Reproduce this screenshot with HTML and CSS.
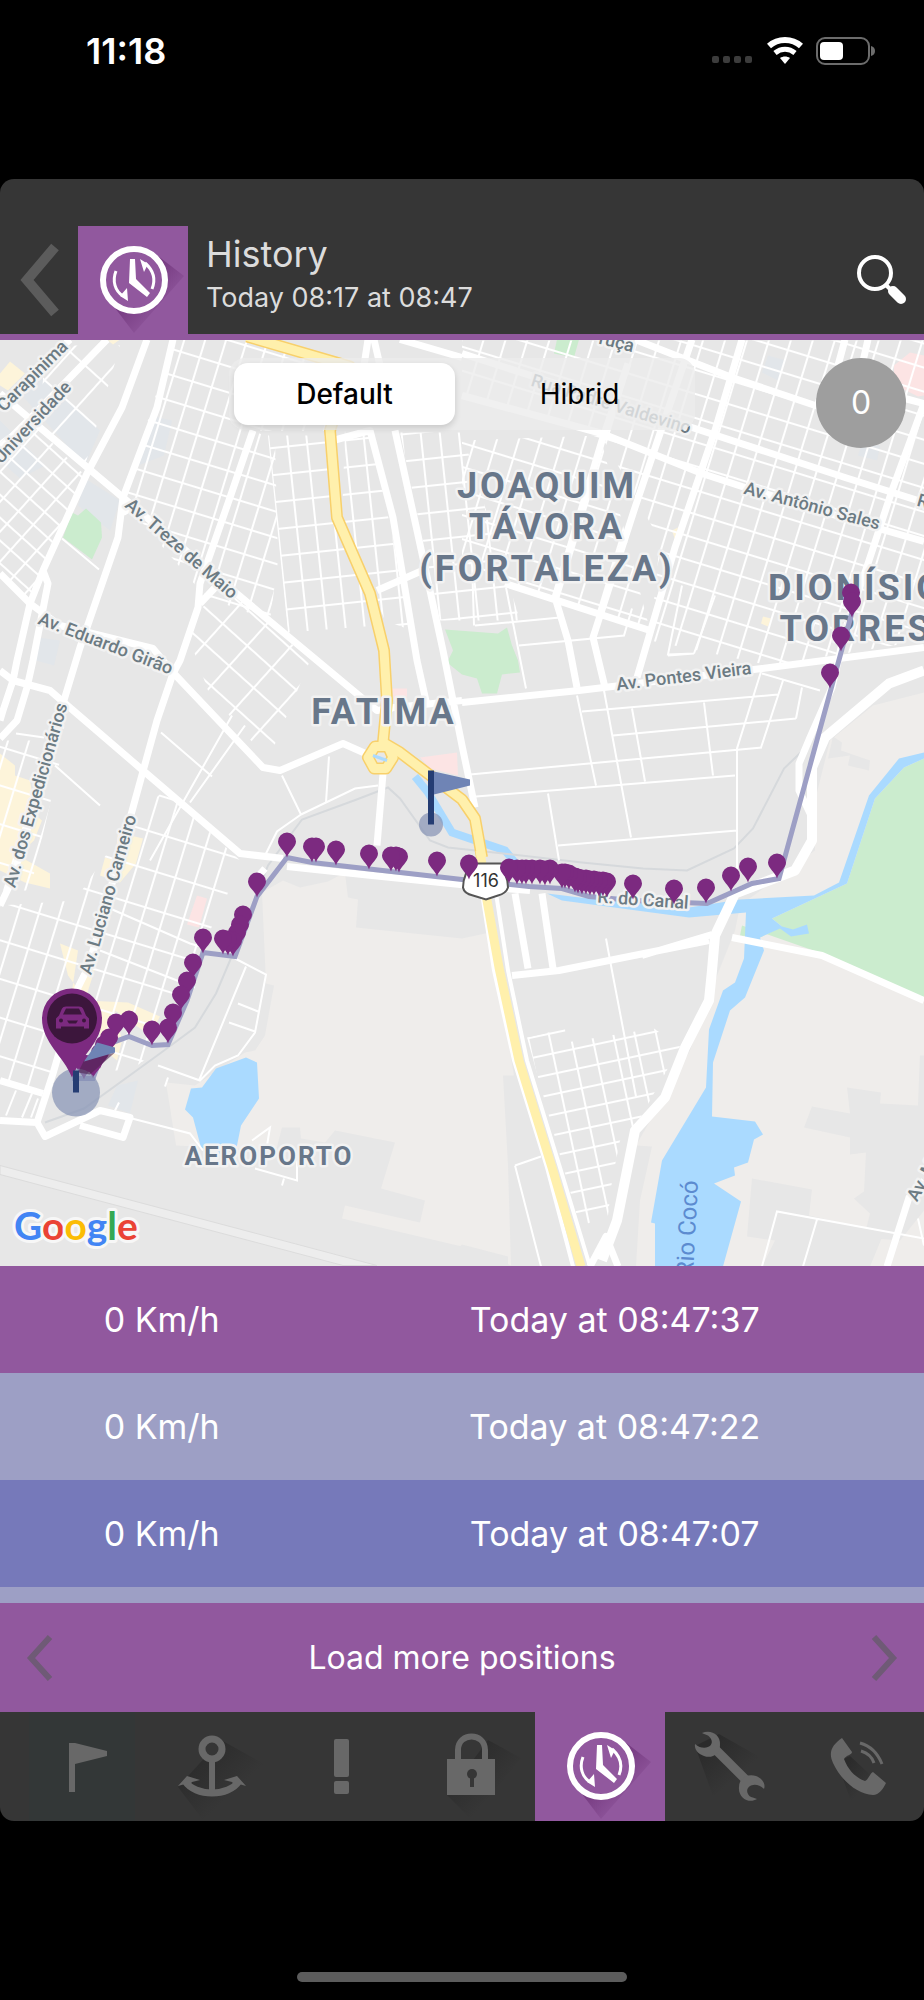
FILE: index.html
```html
<!DOCTYPE html>
<html lang="en">
<head>
    <meta charset="UTF-8">
    <meta name="viewport" content="width=device-width, initial-scale=1.0">
    <title>History</title>
    <link rel="stylesheet" href="styles.css">
</head>
<body>
    <svg width="0" height="0" class="symbols" aria-hidden="true">
        <defs>
            <linearGradient id="shadeDark" x1="0" y1="0" x2="1" y2="1">
                <stop offset="0.2" stop-color="#2b2b2b"/>
                <stop offset="0.65" stop-color="#363636"/>
            </linearGradient>
            <linearGradient id="shadePurple" x1="0" y1="0" x2="1" y2="1">
                <stop offset="0.35" stop-color="#74397f"/>
                <stop offset="0.75" stop-color="#91589e"/>
            </linearGradient>
            <symbol id="clock" viewBox="0 0 110 108">
                <path d="M34 78 L56 107 L106 50 L80 30 Z" fill="url(#shadePurple)"/>
                <circle cx="56" cy="54" r="31" fill="#91589e" stroke="#fff" stroke-width="6"/>
                <path d="M52 33 L57 33 L58 53 L72 67 L69 71 L51 57 Z" fill="#fff"/>
                <path d="M38 45 C34 55 37 65 45 70 M74 63 C78 53 75 44 67 37" fill="none" stroke="#fff" stroke-width="3"/>
                <path d="M42 70 L49 62 L50 75 Z M70 38 L62 33 L66 46 Z" fill="#fff"/>
            </symbol>
        </defs>
    </svg>

    <div class="phone">
        <div class="status-bar">
            <span class="time">11:18</span>
            <div class="status-icons">
                <svg width="43" height="28" viewBox="0 0 43 28" fill="#3c3c3c">
                    <rect x="1" y="19" width="7" height="7" rx="2"/>
                    <rect x="12" y="19" width="7" height="7" rx="2"/>
                    <rect x="23" y="19" width="7" height="7" rx="2"/>
                    <rect x="34" y="19" width="7" height="7" rx="2"/>
                </svg>
                <svg width="36" height="28" viewBox="0 0 36 28">
                    <path d="M2 9 C11 1 25 1 34 9" fill="none" stroke="#fff" stroke-width="6"/>
                    <path d="M8 16 C14 11 22 11 28 16" fill="none" stroke="#fff" stroke-width="5"/>
                    <path d="M18 27 L13 21 C16 19 20 19 23 21 Z" fill="#fff"/>
                </svg>
                <svg width="60" height="28" viewBox="0 0 60 28">
                    <rect x="1" y="1" width="52" height="26" rx="8" fill="none" stroke="#6c6c6c" stroke-width="2"/>
                    <rect x="4" y="5" width="23" height="18" rx="4" fill="#fff"/>
                    <path d="M55 9 Q59 10 59 14 Q59 18 55 19 Z" fill="#6c6c6c"/>
                </svg>
            </div>
        </div>

        <div class="app">
            <header class="header">
                <button type="button" class="back" aria-label="Back">
                    <svg width="42" height="76" viewBox="0 0 42 76"><path d="M37 5 L9 38 L37 71" fill="none" stroke="#5c5c5c" stroke-width="10"/></svg>
                </button>
                <div class="header-tile">
                    <svg width="110" height="108"><use href="#clock"/></svg>
                </div>
                <div class="header-text">
                    <h1>History</h1>
                    <p>Today 08:17 at 08:47</p>
                </div>
                <button type="button" class="search" aria-label="Search">
                    <svg width="50" height="50" viewBox="0 0 50 50">
                        <circle cx="18" cy="18" r="16" fill="none" stroke="#fff" stroke-width="4"/>
                        <path d="M28 29 L33 34" stroke="#fff" stroke-width="4"/>
                        <path d="M36 36 L44 44" stroke="#fff" stroke-width="10" stroke-linecap="round"/>
                    </svg>
                </button>
            </header>

            <main class="map">
                <svg class="map-canvas" viewBox="0 339 924 927" preserveAspectRatio="xMidYMid slice">
                    <defs>
                        <pattern id="gridNorth" width="20" height="25" patternUnits="userSpaceOnUse" patternTransform="translate(180 350) rotate(17)">
                            <path d="M0 1H20M1 0V25"/>
                        </pattern>
                        <pattern id="gridCentre" width="19" height="27" patternUnits="userSpaceOnUse" patternTransform="translate(325 441) rotate(-6)">
                            <path d="M0 1H19M1 0V27"/>
                        </pattern>
                        <pattern id="gridDiagonal" width="20" height="17" patternUnits="userSpaceOnUse" patternTransform="translate(0 470) rotate(42)">
                            <path d="M0 1H20M1 0V17"/>
                        </pattern>
                        <pattern id="gridCampus" width="42" height="38" patternUnits="userSpaceOnUse" patternTransform="translate(70 350) rotate(42)">
                            <path d="M0 1H42M1 0V38"/>
                        </pattern>
                        <pattern id="gridBlocks" width="33" height="27" patternUnits="userSpaceOnUse" patternTransform="translate(211 684) rotate(42)">
                            <path d="M0 1H33M1 0V27"/>
                        </pattern>
                        <pattern id="gridEast" width="21" height="23" patternUnits="userSpaceOnUse" patternTransform="translate(700 490) rotate(17)">
                            <path d="M0 1H21M1 0V23"/>
                        </pattern>
                        <pattern id="gridSouth" width="20" height="37" patternUnits="userSpaceOnUse" patternTransform="translate(0 900) rotate(17)">
                            <path d="M0 1H20M1 0V37"/>
                        </pattern>
                        <pattern id="gridVillage" width="21" height="20" patternUnits="userSpaceOnUse" patternTransform="translate(527 1037) rotate(-12)">
                            <path d="M0 1H21M1 0V20"/>
                        </pattern>
                        <path id="pin" d="M0 0 C-2 -7 -9 -10 -9 -16 A9 9 0 0 1 9 -16 C9 -10 2 -7 0 0 Z"/>
                    </defs>

                    <rect x="0" y="339" width="924" height="927" fill="#e7e7e7"/>

                    <!-- open land -->
                    <g fill="#efedeb">
                        <path d="M262 892 L283 880 L300 887 L328 881 L345 872 L348 897 L358 899 L356 927 L462 938 L490 932 L514 1075 L503 1075 L508 1165 L511 1265 L462 1246 L342 1218 L345 1205 L420 1222 L425 1200 L381 1188 L395 1142 L335 1130 L325 1142 L301 1138 L300 1127 L282 1127 L276 1150 L176 1145 L166 1082 L195 1085 L245 1052 L255 1050 L265 1035 L274 985 L266 983 Z"/>
                        <path d="M924 692 L873 705 L830 740 L815 800 L815 850 L740 905 L735 930 L715 980 L690 1050 L636 1145 L652 1146 L640 1200 L636 1266 L924 1266 Z"/>
                    </g>
                    <g fill="#e7e7e7">
                        <path d="M847 1087 L881 1092 L880 1103 L918 1105 L920 1055 L924 1055 V1210 L900 1240 L864 1237 L870 1213 L854 1198 L864 1191 L866 1152 L850 1154 L850 1137 L804 1127 L812 1106 L850 1113 Z"/>
                        <path d="M752 1178 L812 1189 L809 1215 L884 1232 L870 1266 L762 1266 L775 1240 L747 1236 Z"/>
                        <path d="M833 736 L842 742 L841 750 L870 760 L869 770 L848 765 L850 755 L828 758 Z"/>
                        <path d="M462 1244 L508 1256 V1266 H440 Z"/>
                    </g>
                    <g fill="#e2e6ea">
                        <path d="M40 375 L100 430 L85 465 L22 395 Z M85 478 L120 500 L110 530 L78 505 Z M150 415 L172 420 L164 455 L138 465 L148 430 Z M38 637 L60 640 L54 665 L36 660 Z M117 1085 L138 1080 L130 1113 L108 1105 Z M768 355 L786 360 L778 380 L762 372 Z M862 443 L880 445 L877 460 L858 455 Z M0 420 L45 465 L20 478 L0 460 Z"/>
                    </g>
                    <g fill="#fdf4da">
                        <path d="M10 361 L25 373 L8 390 L0 385 V373 Z M108 340 L120 339 L113 344 Z"/>
                        <path d="M0 753 L15 765 V775 L30 780 L36 815 L42 820 L34 840 L18 855 L50 873 V888 L25 882 L0 870 Z"/>
                        <path d="M118 832 L143 838 L136 863 L120 882 L100 875 L105 857 L115 860 Z M60 943 L78 950 L72 990 L95 968 L85 1000 L128 1002 L160 1016 L150 1035 L115 1010 L122 1040 L117 1060 L105 1050 L90 1005 L68 975 Z"/>
                        <path d="M672 530 L678 527 L675 539 Z M763 616 L771 618 L768 626 L761 623 Z"/>
                    </g>
                    <path d="M197 895 L207 898 L199 927 L187 924 Z M392 688 H407 V700 H394 Z M420 757 L457 752 L458 775 L430 768 Z M894 365 L910 352 L924 355 V395 L918 396 L894 384 Z" fill="#fce4e4"/>

                    <!-- parks -->
                    <g fill="#cbecce">
                        <path d="M63 537 L72 512 L78 515 L86 508 L101 522 L102 537 L92 559 Z"/>
                        <path d="M557 339 H579 L574 357 L554 353 Z"/>
                        <path d="M445 629 L498 633 L507 627 L512 645 L518 660 L520 672 L502 674 L497 693 L482 693 L477 678 L462 674 L447 662 L453 650 Z"/>
                        <path d="M924 758 L904 767 L875 798 L847 883 L772 918 L782 926 L760 937 L740 935 L742 925 L822 953 L924 1000 Z"/>
                    </g>

                    <!-- water -->
                    <g fill="#aadaff">
                        <path d="M202 1087 L216 1068 L246 1057 L257 1062 L259 1098 L241 1125 L236 1150 L218 1154 L201 1147 L193 1117 L185 1109 L191 1088 Z"/>
                        <path d="M547 893 L580 897 L689 907 L740 899 L814 895 L839 882 L869 795 L899 758 L924 752 V758 L904 767 L875 798 L847 883 L772 918 L782 926 L793 929 L807 924 L809 933 L791 936 L780 928 L760 937 L764 950 L745 997 L730 1010 L713 1062 L712 1116 L755 1121 L763 1134 L754 1139 L748 1162 L734 1167 L735 1175 L714 1183 L741 1201 L723 1266 H655 L655 1223 L651 1222 L662 1160 L706 1087 L709 1029 L723 990 L735 982 L744 958 L746 912 L689 917 L562 900 Z"/>
                    </g>
                    <path d="M415 776 L428 792 L452 832 L505 850 L515 862" fill="none" stroke="#aadaff" stroke-width="8"/>

                    <!-- railway -->
                    <path d="M45 1122 L84 1108 L160 1053 L195 1027 L216 993 L230 960 L268 865 L302 819 L354 800 L388 787 L400 798 L430 840 L448 847 L530 856 L582 862 L643 868 L687 870 L734 848 L753 828 L784 768 L807 746" fill="none" stroke="#d6d9dc" stroke-width="2"/>

                    <!-- side streets -->
                    <g class="street-grid">
                        <path d="M173 339 H240 L345 362 L330 430 L253 430 L200 590 L123 500 Z" fill="url(#gridNorth)"/>
                        <path d="M253 430 L275 440 L278 560 L270 620 L215 600 L200 590 Z" fill="url(#gridNorth)"/>
                        <path d="M268 435 L330 435 L340 520 L370 595 L378 625 L288 632 Z" fill="url(#gridCentre)"/>
                        <path d="M345 430 L370 430 L412 630 L385 620 L372 590 L342 520 Z" fill="url(#gridCentre)"/>
                        <path d="M400 432 L462 432 L520 620 L440 620 Z" fill="url(#gridCentre)"/>
                        <path d="M0 440 L30 420 L85 475 L43 570 L28 600 L0 573 Z" fill="url(#gridDiagonal)"/>
                        <path d="M45 345 L120 345 L85 465 L40 425 Z" fill="url(#gridCampus)"/>
                        <path d="M196 610 L232 590 L310 660 L268 760 L208 690 L190 640 Z" fill="url(#gridBlocks)"/>
                        <path d="M462 340 H924 V640 L770 665 L650 640 L660 540 L600 433 L462 395 Z" fill="url(#gridEast)"/>
                        <path d="M462 440 L600 435 L650 630 L510 585 L462 560 Z" fill="url(#gridEast)"/>
                        <path d="M0 905 L75 900 L133 815 L165 790 L240 860 L225 900 L200 950 L165 1045 L130 1070 L55 1070 L43 1095 L0 1083 Z" fill="url(#gridSouth)"/>
                        <path d="M0 740 L30 740 L65 720 L60 760 L30 890 L0 890 Z" fill="url(#gridSouth)"/>
                        <path d="M527 1037 L565 1028 L566 1042 L654 1028 L680 1046 L640 1118 L620 1140 L612 1180 L608 1215 L580 1226 Z" fill="url(#gridVillage)"/>
                    </g>
                    <g class="street">
                        <path d="M55 765 L100 805 M16 733 L44 737 M100 950 L195 987 M110 908 L190 943 L200 946 M235 958 L266 974 L255 1032 L238 1055 L215 1065 L200 1080 L158 1065 M246 966 L199 1080 M238 1003 L258 1011 M229 1022 L255 1031"/>
                        <path d="M282 775 L301 814 L277 831 L265 855 M329 756 L326 802 M301 814 L355 788 L378 785 M161 732 L212 776 M232 715 L150 860 M245 725 L190 802 M62 538 L99 569"/>
                        <path d="M577 695 L596 785 M604 690 L631 837 M582 711 L778 694 M613 735 L796 718 M470 774 L762 747 M476 796 L735 775 M632 708 L645 781 M704 702 L713 775 M762 668 L737 748 L737 870 M783 680 L761 747 M802 687 L796 718 M762 673 L820 690 M548 793 L559 860 M558 845 L737 830"/>
                        <path d="M506 587 L526 688 M475 625 L560 617 M519 645 L624 635 L632 608 M472 560 L474 625 M668 655 L694 653 L668 654 L682 585 M694 653 L715 595"/>
                        <path d="M132 1118 L190 1133 L203 1150 M165 1086 L168 1077 M115 1110 L119 1102 M252 1140 L270 1127 L267 1145 M255 1168 L297 1180 V1160 M282 1185 L284 1178"/>
                        <path d="M515 1165 L541 1156 M515 1165 L541 1266 M606 938 L611 965 L636 1096 M762 1266 L777 1211 L924 1238 M803 1266 L817 1219 M918 1218 L924 1245"/>
                        <path d="M6 1115 L16 1090 M22 1117 L32 1093 M31 1117 L38 1098"/>
                    </g>

                    <!-- avenues -->
                    <g class="avenue">
                        <path d="M70 339 L0 405 M107 339 L40 408 L0 448 M0 393 L40 427 L123 497 L233 590 L317 660 L377 710 L392 708"/>
                        <path d="M147 339 L122 407 L87 473 L43 570 L30 603 L17 660 L13 680 L3 710 L0 720 M43 570 L48 583 L33 660 L27 687 L17 720 L0 738"/>
                        <path d="M173 339 L157 407 L123 497 L118 537 L80 647 L63 703 L33 810 L12 880 L0 905 M123 512 L135 505"/>
                        <path d="M253 430 L230 497 L200 583 L198 607 L180 660 L173 673 L157 720 L133 807 L90 963 L78 987 L53 1073 L37 1122 M200 603 L217 585"/>
                        <path d="M0 573 L30 603 L60 625 L153 648 L173 672 L263 767 L280 770 L343 743 L370 755"/>
                        <path d="M0 670 L13 680 L50 690 L143 770 L240 853 L283 858"/>
                        <path d="M287 866 L372 875 L470 885 L530 890"/>
                        <path d="M383 773 L377 845 M333 440 L370 430 L393 517 L417 660 L427 705 M395 430 L417 530 L443 650 L462 745 L475 807 M377 590 L427 568 M385 708 L462 700"/>
                        <path d="M368 339 L364 365 M374 339 L380 365 M400 339 L462 357"/>
                        <path d="M635 339 L732 377 L860 420 M905 398 L924 403 M462 395 L602 433 L702 473 L745 487 L875 527 L924 541 M462 353 L540 378 L692 427 L845 477 L924 502"/>
                        <path d="M742 339 L715 430 L675 547 L637 677 M924 403 L892 490 L868 563 L845 630 M845 339 L838 365 M868 339 L862 365"/>
                        <path d="M628 363 L602 440 L555 597 L568 640 L577 687 M692 339 L662 427 L635 507 L593 637 L605 687 M505 583 L650 630"/>
                        <path d="M462 702 L579 690 L762 668 L924 647"/>
                        <path d="M515 893 L528 968 M542 893 L553 968 M512 975 L559 970 L709 940 M642 955 L712 934"/>
                        <path d="M732 937 L822 955 L924 1000 M924 1180 L909 1197 L887 1266"/>
                        <path d="M0 1080 L43 1093 M0 1120 L37 1122 L45 1136 L100 1110 L130 1117 L123 1137 L80 1125"/>
                        <path d="M250 885 L265 868 M845 630 L832 687 L810 737 L799 763 L799 790 L812 817"/>
                        <path d="M590 1266 L606 1236 L618 1266"/>
                    </g>
                    <path class="avenue wide" d="M924 670 L889 683 L825 737 L812 767 L812 840 L795 870 L735 893 L715 935 L712 970 L709 1000 L685 1047 L665 1097 L635 1130 L617 1220 L602 1260"/>

                    <!-- motorway -->
                    <path d="M480 880 L494 970 L514 1060 L547 1167 L573 1266 M494 880 L508 970 L527 1060 L560 1167 L590 1266" fill="none" stroke="#fff" stroke-width="4"/>
                    <g class="motorway-edge">
                        <path id="motorway" d="M247 336 L350 366 L330 430 L337 517 L370 593 L384 650 L387 700 L383 742 L400 752 L462 799 L475 818 L482 857"/>
                        <path id="roundabout" d="M368 757 L375 746 L388 746 L393 757 L386 768 L374 768 Z"/>
                    </g>
                    <g class="motorway">
                        <use href="#motorway"/>
                        <use href="#roundabout"/>
                        <path d="M480 850 L487 900 L499 967 L519 1060 L552 1167 L581 1266"/>
                    </g>
                    <path d="M373 755 L387 760" stroke="#aadaff" stroke-width="3"/>

                    <!-- runway -->
                    <path d="M0 1165 L377 1265 H343 L0 1174 Z" fill="#ededed" stroke="#dcdcdc"/>

                    <g class="road-label">
                        <text transform="translate(4 412) rotate(-45)">Carapinima</text>
                        <text transform="translate(1 464) rotate(-47)">Universidade</text>
                        <text transform="translate(124 506) rotate(41)">Av. Treze de Maio</text>
                        <text transform="translate(37 623) rotate(21)">Av. Eduardo Girão</text>
                        <text transform="translate(15 888) rotate(-74)">Av. dos Expedicionários</text>
                        <text transform="translate(91 975) rotate(-74)">Av. Luciano Carneiro</text>
                        <text transform="translate(598 343) rotate(14)">ruça</text>
                        <text transform="translate(530 385) rotate(17)">Rua Padre Valdevino</text>
                        <text transform="translate(743 493) rotate(15)">Av. Antônio Sales</text>
                        <text transform="translate(916 505) rotate(16)">R</text>
                        <text transform="translate(617 690) rotate(-7)">Av. Pontes Vieira</text>
                        <text transform="translate(917 1202) rotate(-62)">Av. M</text>
                    </g>
                    <text class="river-label" transform="translate(693 1276) rotate(-87)">Rio Cocó</text>

                    <g class="area-label">
                        <text x="547" y="497">JOAQUIM</text>
                        <text x="547" y="538">TÁVORA</text>
                        <text x="547" y="580">(FORTALEZA)</text>
                        <text x="384" y="723">FATIMA</text>
                        <text x="856" y="599">DIONÍSIO</text>
                        <text x="856" y="640">TORRES</text>
                        <text x="269" y="1164" class="small">AEROPORTO</text>
                    </g>

                    <path d="M852 612 L779 878 L752 883 L707 903 L633 900 L589 896 L562 888 L529 886 L462 879 L312 862 L287 857 L257 896 L235 956 L203 952 L187 1000 L168 1044 L152 1045 L129 1036 L105 1045 L93 1078 L72 1078" fill="none" stroke="#9d9fc5" stroke-width="5"/>
                    <text class="road-label" transform="translate(597 902) rotate(4)">R. do Canal</text>

                    <!-- road shield -->
                    <path d="M465 863 H506 L505 873 Q508 880 508 887 Q506 893 498 895 L486 899 L473 895 Q464 893 463 887 Q463 880 466 873 Z" fill="#fff" stroke="#555" stroke-width="2"/>
                    <text x="486" y="886" class="shield">116</text>

                    <g id="pins" fill="#7c2a80"></g>

                    <!-- start flag -->
                    <circle cx="431" cy="824" r="12" fill="#8592b3" fill-opacity="0.7"/>
                    <path d="M434 771 L470 779 V785 L434 794 Z" fill="#6f84b5"/>
                    <rect x="428" y="770" width="6" height="54" fill="#253d73"/>

                    <!-- vehicle -->
                    <circle cx="76" cy="1092" r="24" fill="#8592b3" fill-opacity="0.7"/>
                    <path d="M72 1077 C64 1056 42 1042 42 1018 A30 30 0 0 1 102 1018 C102 1042 80 1056 72 1077 Z" fill="#7c2a80"/>
                    <path d="M84 1060 L115 1052 L90 1074 L78 1072 Z" fill="#4d2450" fill-opacity="0.6"/>
                    <path d="M97 1042 L115 1047 V1052 L84 1061 Z" fill="#6f84b5"/>
                    <rect x="73" y="1070" width="6" height="22" fill="#253d73"/>
                    <circle cx="72" cy="1018" r="25" fill="#3c163c"/>
                    <path d="M59 1015 L62 1008 Q63 1006 66 1006 H79 Q82 1006 83 1008 L86 1015 L89 1018 V1028 H84 V1026 H61 V1028 H56 V1018 Z" fill="#7c2a80"/>
                    <path d="M63 1014 L66 1008 H79 L82 1014 Z M67 1020 H78 L76 1023 H69 Z" fill="#3c163c"/>
                    <circle cx="61" cy="1020" r="2" fill="#3c163c"/>
                    <circle cx="84" cy="1020" r="2" fill="#3c163c"/>

                    <text x="14" y="1239" class="logo"><tspan fill="#4285f4">G</tspan><tspan fill="#ea4335">o</tspan><tspan fill="#fbbc05">o</tspan><tspan fill="#4285f4">g</tspan><tspan fill="#34a853">l</tspan><tspan fill="#ea4335">e</tspan></text>
                </svg>

                <div class="map-type">
                    <button type="button" class="active">Default</button>
                    <button type="button">Hibrid</button>
                </div>
                <span class="speed">0</span>
            </main>

            <div class="positions">
                <table>
                    <tbody>
                        <tr><td>0 Km/h</td><td>Today at 08:47:37</td></tr>
                        <tr><td>0 Km/h</td><td>Today at 08:47:22</td></tr>
                        <tr><td>0 Km/h</td><td>Today at 08:47:07</td></tr>
                        <tr><td></td><td></td></tr>
                    </tbody>
                </table>
            </div>

            <div class="load-more">
                <button type="button" aria-label="Previous">
                    <svg width="28" height="48" viewBox="0 0 28 48"><path d="M24 3 L5 24 L24 45" fill="none" stroke="#6f5a76" stroke-width="6"/></svg>
                </button>
                <button type="button">Load more positions</button>
                <button type="button" aria-label="Next">
                    <svg width="28" height="48" viewBox="0 0 28 48"><path d="M4 3 L23 24 L4 45" fill="none" stroke="#6f5a76" stroke-width="6"/></svg>
                </button>
            </div>

            <nav class="tabs">
                <button type="button" class="flag" aria-label="Flag">
                    <svg width="110" height="108" viewBox="0 0 110 108">
                        <path d="M42 31 H48 L80 39 V44 L48 52 V80 H42 Z" fill="#686868"/>
                    </svg>
                </button>
                <button type="button" aria-label="Anchor">
                    <svg width="110" height="108" viewBox="0 0 110 108">
                        <path d="M22 75 L47 108 L108 52 L65 28 Z" fill="url(#shadeDark)"/>
                        <circle cx="56" cy="37" r="10" fill="#363636" stroke="#686868" stroke-width="7"/>
                        <path d="M56 48 V80" stroke="#686868" stroke-width="6"/>
                        <path d="M29 69 C39 85 73 85 83 69" fill="none" stroke="#686868" stroke-width="7"/>
                        <path d="M22 74 L31 64 L44 68 L36 70 L32 75 L29 72 Z M90 74 L81 64 L68 68 L76 70 L80 75 L83 72 Z" fill="#686868"/>
                    </svg>
                </button>
                <button type="button" aria-label="Alerts">
                    <svg width="110" height="108" viewBox="0 0 110 108" fill="#686868">
                        <rect x="48" y="27" width="15" height="38" rx="2"/>
                        <rect x="48" y="69" width="15" height="13" rx="2"/>
                    </svg>
                </button>
                <button type="button" aria-label="Lock">
                    <svg width="110" height="108" viewBox="0 0 110 108">
                        <path d="M31 83 L56 108 L105 46 L72 28 Z" fill="url(#shadeDark)"/>
                        <path d="M42 50 V38 C42 20 69 20 69 38 V50" fill="none" stroke="#686868" stroke-width="6"/>
                        <rect x="31" y="47" width="48" height="36" fill="#686868"/>
                        <circle cx="56" cy="62" r="5" fill="#363636"/>
                        <path d="M56 62 V75" stroke="#363636" stroke-width="4"/>
                    </svg>
                </button>
                <button type="button" class="active" aria-label="History">
                    <svg width="110" height="108"><use href="#clock"/></svg>
                </button>
                <button type="button" aria-label="Maintenance">
                    <svg width="110" height="108" viewBox="0 0 110 108">
                        <path d="M20 34 L38 84 L90 48 L44 22 Z" fill="url(#shadeDark)"/>
                        <path d="M40 37 L74 71" stroke="#686868" stroke-width="9"/>
                        <path d="M27 21 C35 17 46 22 45 33 C45 42 37 47 29 44 C23 42 19 37 20 32 C29 40 40 34 36 27 C34 23 31 23 27 21 Z" fill="#686868"/>
                        <path d="M82 87 C74 92 63 86 64 75 C64 66 73 61 81 64 C87 66 91 72 89 77 C80 68 69 75 73 82 C75 86 78 85 82 87 Z" fill="#686868"/>
                    </svg>
                </button>
                <button type="button" aria-label="Call">
                    <svg width="110" height="108" viewBox="0 0 110 108">
                        <path d="M33 50 L48 92 L74 70 L46 44 Z" fill="url(#shadeDark)"/>
                        <path d="M38 26 C28 33 24 40 29 51 C38 70 54 82 69 83 C75 83 79 77 82 71 L69 60 C66 61 65 67 61 69 C52 66 44 58 40 47 C42 43 48 43 48 40 Z" fill="#686868"/>
                        <path d="M56 31 C67 34 74 42 78 52 M57 39 C64 41 68 45 70 51" fill="none" stroke="#686868" stroke-width="3"/>
                    </svg>
                </button>
            </nav>
        </div>

        <div class="home-area">
            <div class="home-indicator"></div>
        </div>
    </div>

    <script>
        const positions = [
            [851, 608], [852, 617], [841, 651], [830, 688], [777, 878], [748, 882], [731, 891], [706, 903],
            [674, 904], [633, 899], [607, 897], [603, 896], [599, 896], [594, 895], [590, 895], [586, 894],
            [582, 894], [578, 893], [575, 892], [569, 889], [565, 888], [562, 888], [550, 884], [545, 885],
            [540, 884], [532, 884], [526, 884], [522, 884], [517, 884], [509, 883], [469, 879],
            [437, 876], [399, 872], [396, 871], [391, 871], [369, 869], [336, 865], [316, 862], [312, 862],
            [287, 857], [257, 897], [243, 930], [240, 940], [237, 948], [233, 956], [228, 955], [223, 954],
            [203, 953], [193, 978], [187, 996], [181, 1010], [173, 1028], [168, 1043], [152, 1045], [129, 1035],
            [116, 1038], [109, 1053], [104, 1060], [100, 1068], [93, 1078], [84, 1079]
        ];

        document.getElementById("pins").innerHTML = positions
            .map(([x, y]) => `<use href="#pin" x="${x}" y="${y}"/>`)
            .join("");
    </script>
</body>
</html>
```

FILE: styles.css
```css
* {
    box-sizing: border-box;
}

body {
    font-family: Inter, "Liberation Sans", sans-serif;
    background-color: #000;
    color: #fff;
    margin: 0;
}

h1, p {
    margin: 0;
    font-weight: 400;
}

button {
    padding: 0;
    background: none;
    border: none;
    color: inherit;
    font-family: inherit;
    cursor: pointer;
}

svg {
    display: block;
    flex-shrink: 0;
}

.symbols {
    position: absolute;
}

.phone {
    display: flex;
    flex-direction: column;
    min-height: 100vh;
}

.status-bar {
    display: flex;
    justify-content: space-between;
    align-items: flex-start;
    height: 179px;
    padding: 30px 48px 0 86px;
}

.time {
    font-size: 36px;
    font-weight: 600;
    line-height: 42px;
}

.status-icons {
    display: flex;
    gap: 13px;
    padding-top: 7px;
}

.app {
    flex: 1;
    display: flex;
    flex-direction: column;
    background-color: #363636;
    border-radius: 14px;
    overflow: hidden;
}

.header {
    display: flex;
    padding-top: 47px;
    border-bottom: 6px solid #91589e;
}

.back {
    display: flex;
    justify-content: center;
    align-items: center;
    width: 78px;
}

.header-tile {
    background-color: #91589e;
}

.header-text {
    flex: 1;
    padding: 6px 18px 0;
    color: #dcdcdc;
}

.header-text h1 {
    font-size: 36px;
    line-height: 44px;
}

.header-text p {
    font-size: 27px;
    line-height: 44px;
}

.search {
    padding-right: 17px;
}

.map {
    flex: 1;
    position: relative;
    min-height: 500px;
    overflow: hidden;
}

.map-canvas {
    position: absolute;
    width: 100%;
    height: 100%;
}

.map-type {
    position: absolute;
    top: 18px;
    left: 50%;
    transform: translateX(-50%);
    display: flex;
    gap: 14px;
    width: 466px;
    height: 72px;
    padding: 5px;
    background-color: rgba(236, 236, 236, 0.8);
    border-radius: 16px;
}

.map-type button {
    flex: 1;
    color: #000;
    font-size: 28px;
}

.map-type .active {
    background-color: #fff;
    border-radius: 14px;
    box-shadow: 0 3px 6px rgba(0, 0, 0, 0.15);
    font-weight: 500;
}

.speed {
    position: absolute;
    top: 18px;
    right: 18px;
    width: 90px;
    height: 90px;
    border-radius: 50%;
    background-color: #9e9e9e;
    font-size: 32px;
    line-height: 90px;
    text-align: center;
}

.street-grid {
    stroke: none;
}

pattern path,
.street path {
    fill: none;
    stroke: #fff;
    stroke-width: 2;
}

.avenue {
    fill: none;
    stroke: #fff;
    stroke-width: 7;
    stroke-linejoin: round;
}

.wide {
    stroke-width: 10;
}

.motorway-edge {
    fill: none;
    stroke: #f8d06b;
    stroke-width: 12;
    stroke-linejoin: round;
}

.motorway {
    fill: none;
    stroke: #fff0ac;
    stroke-width: 9;
    stroke-linejoin: round;
}

.road-label,
.river-label,
.area-label {
    font-family: Roboto, sans-serif;
    font-weight: 500;
    paint-order: stroke;
    stroke: #f2f2f2;
    stroke-width: 5;
    stroke-linejoin: round;
}

.road-label {
    fill: #6c7b83;
    font-size: 18px;
}

.river-label {
    fill: #5c8bd0;
    font-size: 24px;
    font-weight: 400;
    stroke: none;
}

.area-label {
    fill: #68778a;
    font-size: 36px;
    font-weight: 700;
    letter-spacing: 3px;
    text-anchor: middle;
}

.area-label .small {
    font-size: 26px;
    letter-spacing: 2px;
}

.shield {
    fill: #333;
    font-size: 18px;
    text-anchor: middle;
}

.logo {
    font-family: Lato, sans-serif;
    font-size: 39px;
    font-weight: 700;
    paint-order: stroke;
    stroke: #f7f7f7;
    stroke-width: 6;
    stroke-linejoin: round;
}

.positions {
    height: 337px;
    overflow: hidden;
}

.positions table {
    width: 100%;
    border-collapse: collapse;
    table-layout: fixed;
}

.positions tr {
    height: 107px;
    background-color: #9d9fc5;
}

.positions tr:first-child {
    background-color: #91589e;
}

.positions tr:nth-child(3) {
    background-color: #7679ba;
}

.positions td {
    padding: 0 18px 0 0;
    font-size: 34px;
    text-align: center;
}

.positions td:first-child {
    width: 35%;
    padding: 0;
}

.load-more {
    display: flex;
    justify-content: space-between;
    align-items: center;
    height: 109px;
    padding: 0 26px;
    background-color: #91589e;
}

.load-more button {
    font-size: 32px;
}

.tabs {
    display: flex;
    height: 109px;
    padding-left: 17px;
}

.tabs button {
    flex: 1;
    display: flex;
    justify-content: center;
}

.tabs .flag {
    background: linear-gradient(#333737, #333737) center / 106px 100% no-repeat;
}

.tabs .active {
    background-color: #91589e;
}

.home-area {
    display: flex;
    justify-content: center;
    align-items: flex-end;
    height: 179px;
    padding-bottom: 18px;
}

.home-indicator {
    width: 330px;
    height: 10px;
    border-radius: 5px;
    background-color: #5c5c5c;
}
```
